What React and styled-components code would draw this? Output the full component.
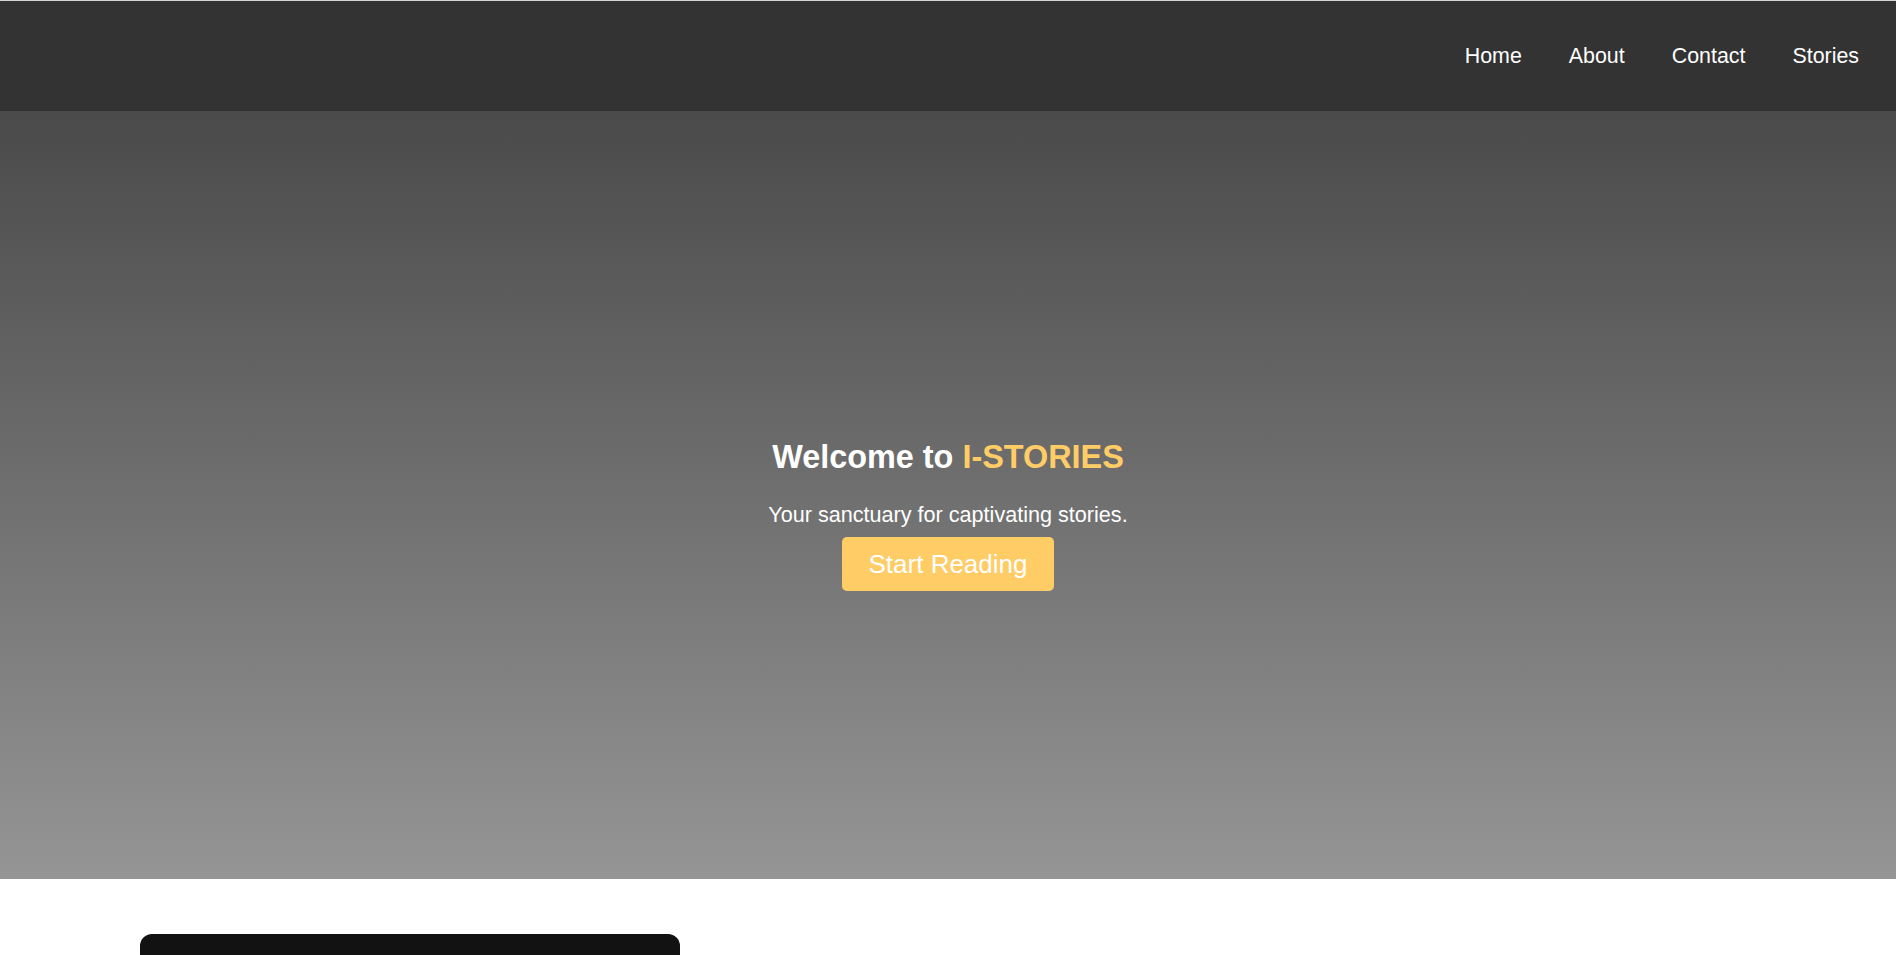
import React from "react";
import styled, { createGlobalStyle } from "styled-components";

const GlobalStyle = createGlobalStyle`
  * {
    box-sizing: border-box;
  }
  body {
    margin: 0;
    font-family: "Liberation Sans", Arial, sans-serif;
    background: #ffffff;
  }
`;

const Page = styled.div`
  border-top: 1px solid #d6d6d6;
`;

const Header = styled.header`
  height: 110px;
  background: #333333;
  display: flex;
  align-items: center;
  justify-content: flex-end;
  padding-right: 37px;
`;

const Nav = styled.nav`
  display: flex;
  gap: 47px;
`;

const NavLink = styled.a`
  color: #ffffff;
  font-size: 21.4px;
  text-decoration: none;
  cursor: pointer;
`;

const Hero = styled.section`
  height: 768px;
  background: linear-gradient(#4a4a4a, #959595);
  display: flex;
  flex-direction: column;
  align-items: center;
  padding-top: 328px;
  color: #ffffff;
`;

const Title = styled.h1`
  margin: 0;
  font-size: 32.4px;
  font-weight: bold;
  line-height: 37px;
  span {
    color: #ffcc66;
  }
`;

const Tagline = styled.p`
  margin: 27px 0 10px;
  font-size: 21.6px;
  line-height: 24px;
`;

const StartButton = styled.button`
  background: #ffcc66;
  color: #ffffff;
  border: none;
  border-radius: 5px;
  font-family: inherit;
  font-size: 26px;
  height: 54px;
  padding: 0 27px;
  cursor: pointer;
`;

const Stories = styled.section`
  padding: 55px 140px 60px;
`;

const StoryCard = styled.div`
  width: 540px;
  height: 320px;
  background: #121212;
  border-radius: 12px;
`;

const App = () => {
  return (
    <Page>
      <GlobalStyle />
      <Header>
        <Nav>
          <NavLink>Home</NavLink>
          <NavLink>About</NavLink>
          <NavLink>Contact</NavLink>
          <NavLink>Stories</NavLink>
        </Nav>
      </Header>
      <Hero>
        <Title>
          Welcome to <span>I-STORIES</span>
        </Title>
        <Tagline>Your sanctuary for captivating stories.</Tagline>
        <StartButton>Start Reading</StartButton>
      </Hero>
      <Stories>
        <StoryCard />
      </Stories>
    </Page>
  );
};

export default App;
